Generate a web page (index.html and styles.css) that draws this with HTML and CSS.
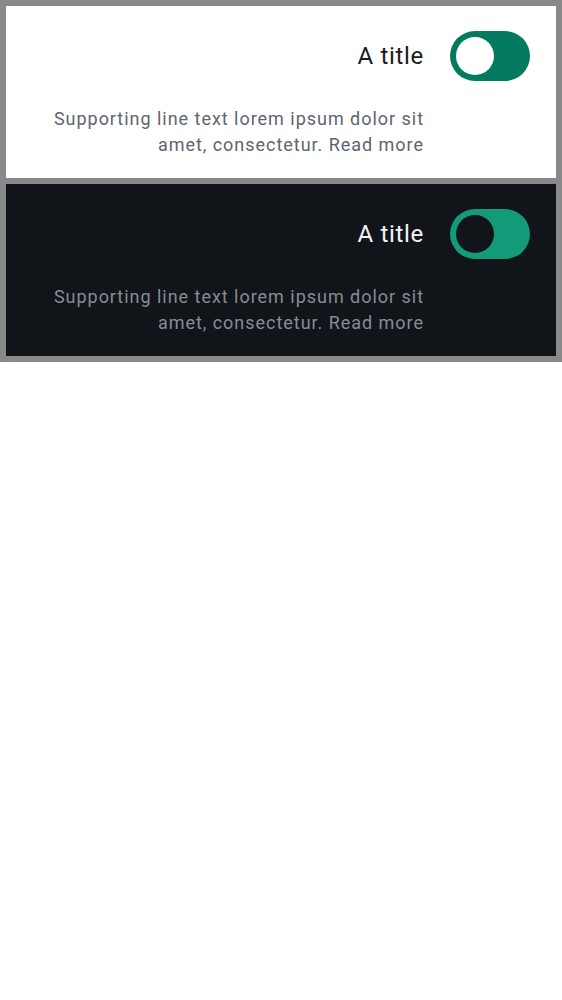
FILE: index.html
```html
<!DOCTYPE html>
<html lang="en">
<head>
<meta charset="utf-8">
<title>Switch list items</title>
<link rel="stylesheet" href="styles.css">
</head>
<body>
<div class="frame">
  <section class="panel panel-light">
    <div class="item">
      <div class="content">
        <div class="title">A title</div>
        <p class="support">Supporting line text lorem ipsum dolor sit amet, consectetur. Read more</p>
      </div>
      <div class="switch" role="switch" aria-checked="false"><span class="knob"></span></div>
    </div>
  </section>
  <section class="panel panel-dark">
    <div class="item">
      <div class="content">
        <div class="title">A title</div>
        <p class="support">Supporting line text lorem ipsum dolor sit amet, consectetur. Read more</p>
      </div>
      <div class="switch" role="switch" aria-checked="false"><span class="knob"></span></div>
    </div>
  </section>
</div>
</body>
</html>
```
FILE: styles.css
```css
html, body {
  margin: 0;
  padding: 0;
  background: #ffffff;
}
body {
  font-family: Roboto, "Noto Sans", "Liberation Sans", sans-serif;
}
.frame {
  background: #898989;
  padding: 6px;
  display: flex;
  flex-direction: column;
  gap: 6px;
}
.panel {
  height: 172px;
  box-sizing: border-box;
  padding: 25px 26px 0 26px;
}
.panel-light {
  background: #ffffff;
}
.panel-dark {
  background: #111418;
}
.item {
  display: flex;
  align-items: flex-start;
  gap: 26px;
}
.content {
  flex: 1;
  text-align: right;
}
.title {
  font-size: 24px;
  font-weight: 400;
  line-height: 50px;
  letter-spacing: 0.7px;
}
.support {
  margin: 25px 0 0 0;
  font-size: 18px;
  font-weight: 400;
  line-height: 26px;
  letter-spacing: 0.97px;
}
.panel-light .title { color: #1a1c20; }
.panel-light .support { color: #5e6570; }
.panel-dark .title { color: #f2f3f5; }
.panel-dark .support { color: #868c96; }
.switch {
  width: 80px;
  height: 50px;
  border-radius: 25px;
  box-sizing: border-box;
  padding: 6px;
  display: flex;
  align-items: center;
  flex-shrink: 0;
}
.knob {
  width: 38px;
  height: 38px;
  border-radius: 50%;
}
.panel-light .switch { background: #047b5f; }
.panel-light .knob { background: #ffffff; }
.panel-dark .switch { background: #139a78; }
.panel-dark .knob { background: #111418; }
```
